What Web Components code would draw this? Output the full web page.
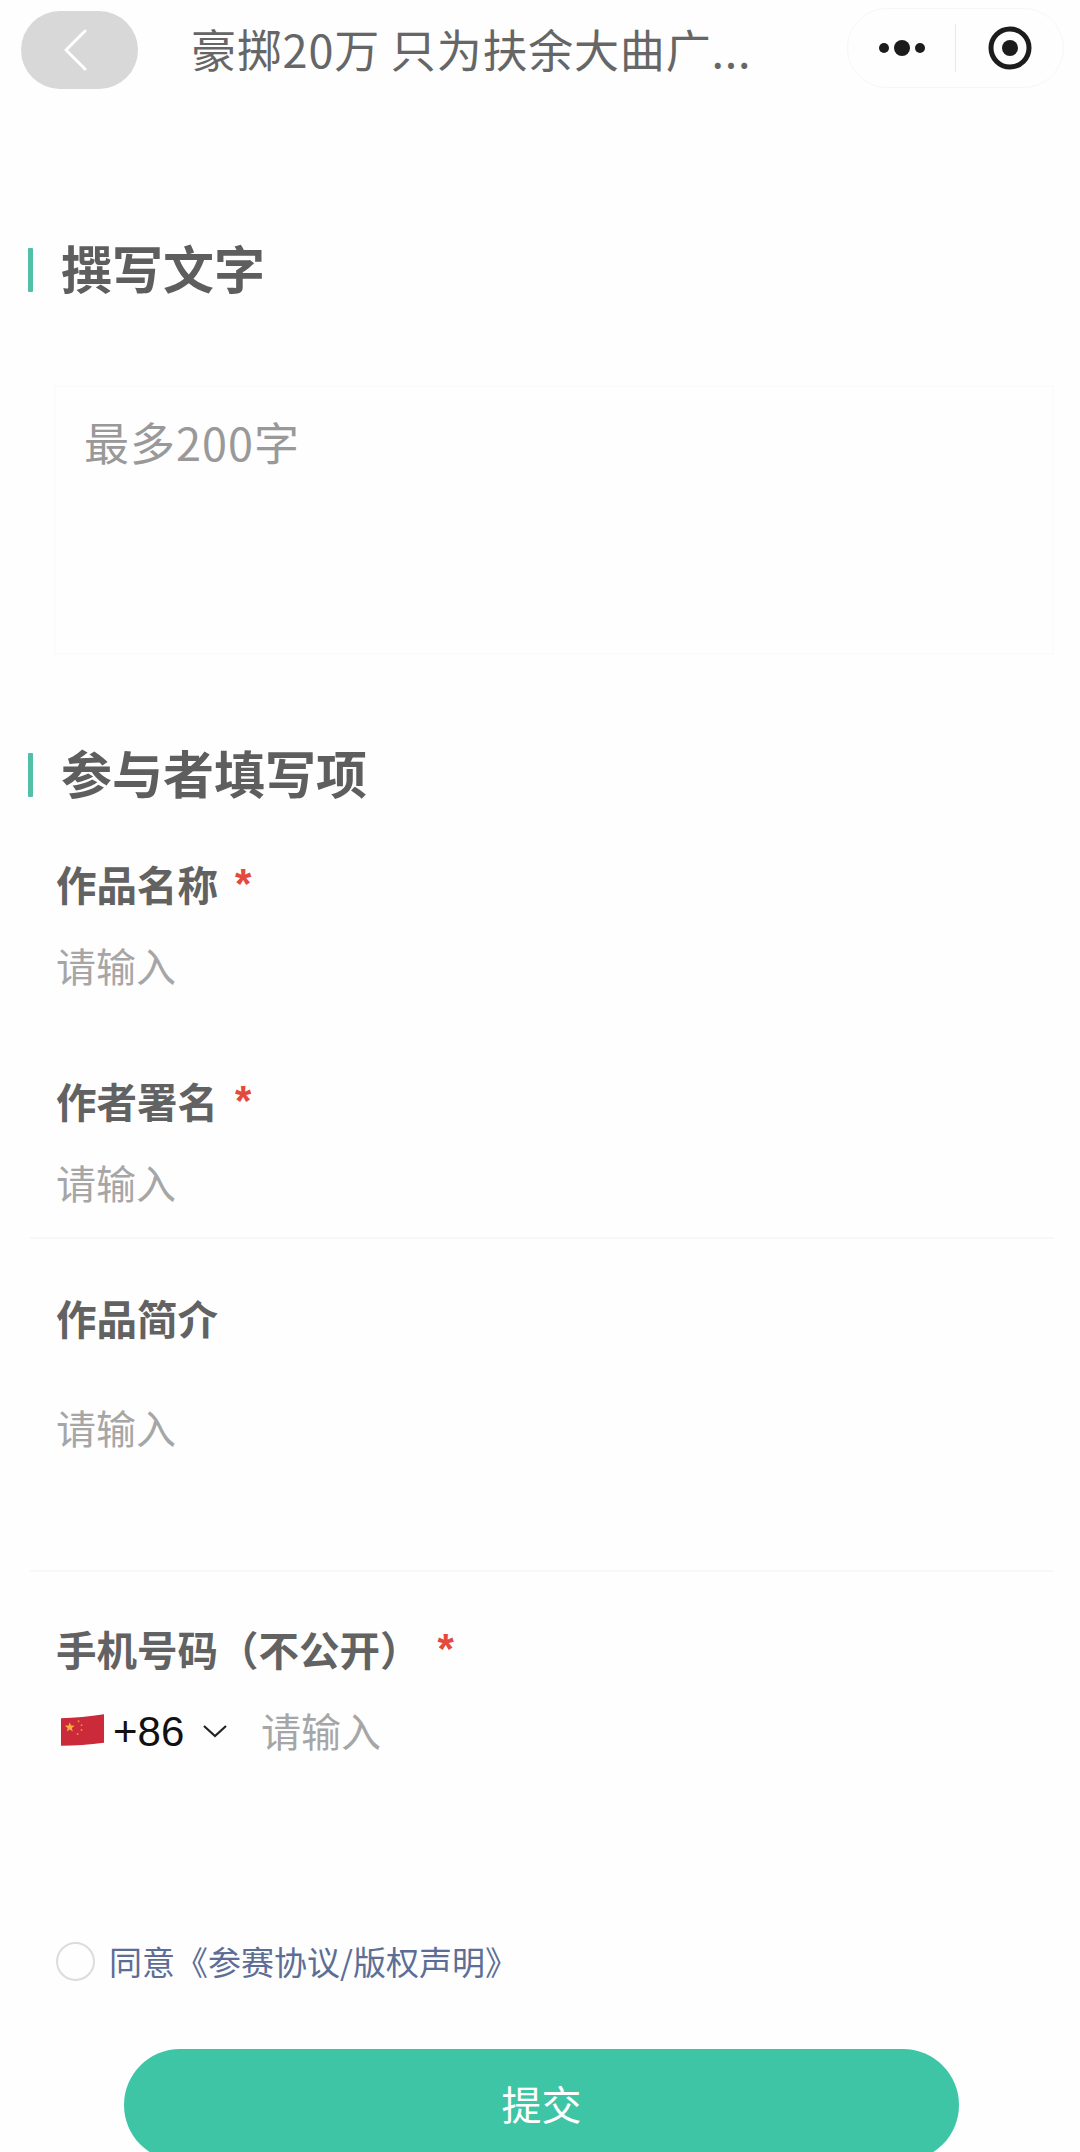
<!DOCTYPE html>
<html lang="zh">
<head>
  <meta charset="utf-8">
  <title>撰写文字</title>
  <style>
    html, body { margin: 0; height: 100%; }
    body {
      background: #fefefe;
      font-family: "Noto Sans CJK SC", "Noto Sans", sans-serif;
      overflow: hidden;
    }
  </style>
</head>
<body>
  <template id="app-navbar">
    <style>
      :host { display: flex; align-items: flex-start; height: 96px; box-sizing: border-box; padding: 8px 16px 0 21px; }
      .back {
        width: 117px; height: 78px; margin-top: 3px; border-radius: 39px; background: #d8d8d8;
        display: flex; align-items: center; justify-content: center; flex: none;
      }
      .back svg { margin-right: 9px; }
      .title {
        flex: 1; margin-left: 53px; font-size: 45px; line-height: 80px; color: #666;
        white-space: nowrap; letter-spacing: .8px; margin-top: 1px;
      }
      .capsule {
        width: 217px; height: 80px; box-sizing: border-box; border: 1px solid #f6f6f6; border-radius: 40px;
        display: flex; align-items: center; flex: none;
      }
      .more { width: 107px; display: flex; justify-content: center; box-sizing: border-box; }
      .line { width: 1px; height: 48px; background: #e8e8e8; }
      .target { flex: 1; display: flex; justify-content: center; }
    </style>
    <div class="back">
      <svg width="26" height="42" viewBox="0 0 26 42"><path d="M23 2 4 21l19 19" fill="none" stroke="#fff" stroke-width="3" stroke-linecap="round" stroke-linejoin="round"/></svg>
    </div>
    <div class="title"><slot></slot></div>
    <div class="capsule">
      <div class="more">
        <svg width="46" height="20" viewBox="0 0 46 20" fill="#1c1c1c"><circle cx="5" cy="10" r="5"/><circle cx="23" cy="10" r="8"/><circle cx="41" cy="10" r="5"/></svg>
      </div>
      <div class="line"></div>
      <div class="target">
        <svg width="44" height="44" viewBox="0 0 44 44"><circle cx="22" cy="22" r="19" fill="none" stroke="#1c1c1c" stroke-width="5"/><circle cx="22" cy="22" r="8" fill="#1c1c1c"/></svg>
      </div>
    </div>
  </template>

  <template id="section-heading">
    <style>
      :host { display: flex; align-items: center; height: 60px; padding-left: 28px; }
      .bar { width: 5px; height: 44px; background: #52c0a8; border-radius: 1px; flex: none; }
      h2 { margin: -7px 0 0 28px; font-size: 51px; line-height: 60px; font-weight: 700; color: #5e5e5e; }
    </style>
    <div class="bar"></div>
    <h2><slot></slot></h2>
  </template>

  <template id="text-box">
    <style>
      :host {
        display: block; box-sizing: border-box; width: 1000px; height: 270px; margin-left: 54px;
        border: 2px solid #fbfbfb; padding: 27px 28px;
        font-size: 45px; line-height: 56px; letter-spacing: 1px; color: #999;
      }
    </style>
    <slot></slot>
  </template>

  <template id="form-field">
    <style>
      :host { display: block; box-sizing: border-box; width: 1024px; margin-left: 30px; padding-left: 26px; }
      :host([divider]) { border-bottom: 2px solid #f8f8f8; }
      .label { display: flex; height: 50px; align-items: center; font-size: 40.5px; line-height: 50px; font-weight: 700; color: #626262; }
      #text { margin-top: -3px; }
      .star { display: none; color: #e4493c; font: 700 42px/50px "Liberation Sans", sans-serif; margin-top: -3px; }
      :host([required]) .star { display: block; margin-left: 17px; }
      .body { margin-top: var(--gap, 30px); padding-bottom: var(--pad, 0); font-size: 40px; line-height: 50px; color: #a6a6a6; }
    </style>
    <div class="label"><span id="text"></span><span class="star">*</span></div>
    <div class="body"><slot></slot></div>
  </template>

  <template id="phone-input">
    <style>
      :host { display: flex; align-items: center; height: 50px; padding-left: 4px; }
      .code { margin-left: 8px; margin-top: 3px; font: 42px/50px "Liberation Sans", sans-serif; color: #111; width: 89px; flex: none; }
      .chev { display: block; flex: none; margin-top: 2px; }
      .hint { margin-left: 33px; font-size: 40px; line-height: 50px; color: #a6a6a6; }
    </style>
    <svg width="45" height="34" viewBox="0 0 46 34">
      <path d="M1 5C15 5 30 3 45 1v29C30 32 15 33 1 33z" fill="#ca2a3a"/>
      <path d="m10 9 1.3 3.5 3.8.1-3 2.3 1 3.6-3.100-2.100-3.100 2.100 1-3.600-3-2.300 3.800-.1z" fill="#f2b23a"/>
      <g fill="#e8953a"><circle cx="19" cy="8" r="1"/><circle cx="22" cy="12" r="1"/><circle cx="22" cy="17" r="1"/><circle cx="18" cy="21" r="1"/></g>
    </svg>
    <span class="code">+86</span>
    <svg class="chev" width="26" height="14" viewBox="0 0 26 14"><path d="M2 2l11 10L24 2" fill="none" stroke="#222" stroke-width="2.2"/></svg>
    <span class="hint"><slot></slot></span>
  </template>

  <template id="agree-row">
    <style>
      :host { display: flex; align-items: center; height: 40px; padding-left: 56px; }
      .ring { width: 39px; height: 39px; box-sizing: border-box; border: 2px solid #dcdcdc; border-radius: 50%; flex: none; }
      .text { margin-left: 14px; font-size: 33px; line-height: 40px; color: #5d6e96; white-space: nowrap; }
    </style>
    <div class="ring"></div>
    <div class="text"><slot></slot></div>
  </template>

  <template id="submit-button">
    <style>
      :host { display: block; width: 835px; margin-left: 124px; }
      .btn {
        height: 112px; border-radius: 56px; background: #3ec5a6; color: #fff;
        display: flex; align-items: center; justify-content: center; font-size: 40px;
      }
      .btn span { margin-top: -4px; }
    </style>
    <div class="btn"><span><slot></slot></span></div>
  </template>

  <app-navbar>豪掷20万 只为扶余大曲广...</app-navbar>
  <section-heading style="margin-top:144px">撰写文字</section-heading>
  <text-box style="margin-top:85px">最多200字</text-box>
  <section-heading style="margin-top:90px">参与者填写项</section-heading>
  <form-field label="作品名称" required style="margin-top:55px">请输入</form-field>
  <form-field label="作者署名" required divider style="margin-top:87px;--pad:30px">请输入</form-field>
  <form-field label="作品简介" divider style="margin-top:55px;--gap:58px;--pad:118px">请输入</form-field>
  <form-field label="手机号码（不公开）" required style="margin-top:53px;--gap:30px"><phone-input>请输入</phone-input></form-field>
  <agree-row style="margin-top:186px">同意《参赛协议/版权声明》</agree-row>
  <submit-button style="margin-top:68px">提交</submit-button>

  <script>
    // plain elements: clone the template of the same name into an open shadow root
    for (const name of ['app-navbar', 'section-heading', 'text-box', 'phone-input', 'agree-row', 'submit-button']) {
      customElements.define(name, class extends HTMLElement {
        constructor() {
          super();
          this.attachShadow({mode: 'open'}).appendChild(
            document.getElementById(name).content.cloneNode(true)
          );
        }
      });
    }

    customElements.define('form-field', class extends HTMLElement {
      constructor() {
        super();
        this.attachShadow({mode: 'open'}).appendChild(
          document.getElementById('form-field').content.cloneNode(true)
        );
      }
      connectedCallback() {
        this.shadowRoot.getElementById('text').textContent = this.getAttribute('label');
      }
    });
  </script>
</body>
</html>
